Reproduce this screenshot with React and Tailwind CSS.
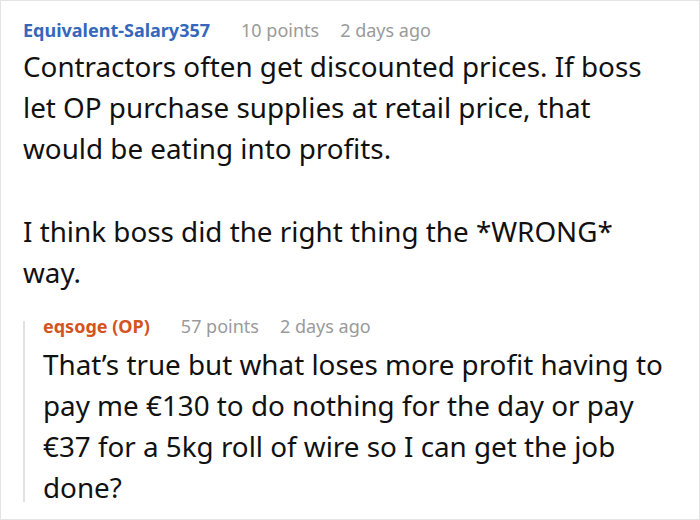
const Meta = ({ name, nameColor, points }) => (
  <div className="flex items-baseline text-[18px] leading-6">
    <span className={`font-bold ${nameColor}`}>{name}</span>
    <span className="ml-[31px] text-[#9a9a9a]">{points}</span>
    <span className="ml-[21px] text-[#9a9a9a]">2 days ago</span>
  </div>
)

function App() {
  return (
    <div
      className="w-[700px] h-[520px] bg-white border border-[#e4e4e4] overflow-hidden text-[#111]"
      style={{ fontFamily: '"Noto Sans", "Open Sans", sans-serif' }}
    >
      <div className="pl-[22px] pt-[17px]">
        <Meta name="Equivalent-Salary357" nameColor="text-[#3468ba]" points="10 points" />
        <div className="text-[27.8px] leading-[41px] mt-[4px] w-[636px]">
          <p>Contractors often get discounted prices. If boss let OP purchase supplies at retail price, that would be eating into profits.</p>
          <p className="mt-[42px]">I think boss did the right thing the *WRONG* way.</p>
        </div>

        <div className="flex mt-[21px]">
          <div className="w-[2px] bg-[#e2e2e2] mt-[7px] mb-[6px]" />
          <div className="pl-[18px]">
            <Meta name="eqsoge (OP)" nameColor="text-[#d4531e]" points="57 points" />
            <p className="text-[27.8px] leading-[41px] mt-[6px] w-[632px]">
              That’s true but what loses more profit having to pay me €130 to do nothing for the day or pay €37 for a 5kg roll of wire so I can get the job done?
            </p>
          </div>
        </div>
      </div>
    </div>
  )
}

export default App
